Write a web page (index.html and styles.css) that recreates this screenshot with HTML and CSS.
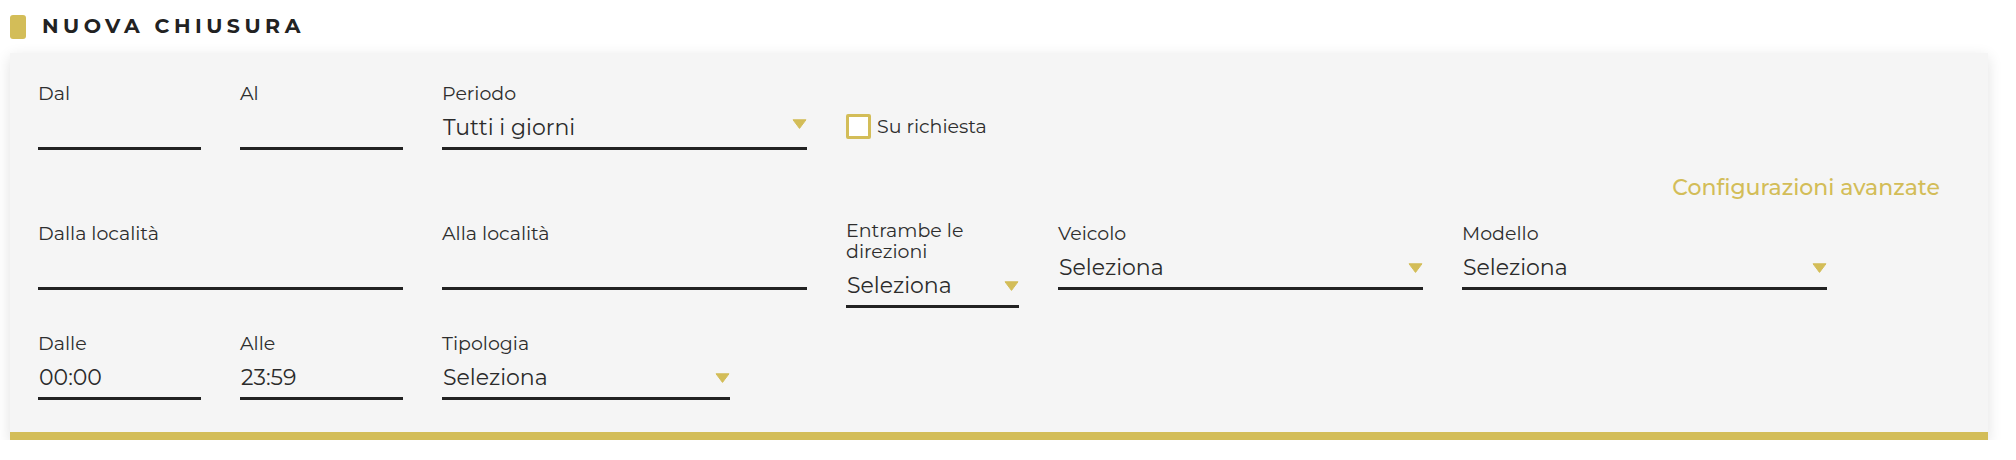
FILE: index.html
```html
<!DOCTYPE html>
<html lang="it">
<head>
<meta charset="utf-8">
<title>Nuova chiusura</title>
<link rel="stylesheet" href="styles.css">
</head>
<body>
<div class="page">
  <header class="section-title">
    <span class="marker"></span>
    <h2 class="title">NUOVA CHIUSURA</h2>
  </header>

  <section class="card">
    <div class="row">
      <div class="field w-sm">
        <div class="label">Dal</div>
        <div class="input"></div>
      </div>
      <div class="field w-sm">
        <div class="label">Al</div>
        <div class="input"></div>
      </div>
      <div class="field w-lg">
        <div class="label">Periodo</div>
        <div class="input select">
          <span class="value">Tutti i giorni</span>
          <svg class="caret caret-high" width="15" height="10" viewBox="0 0 15 10"><path d="M1 0.8 H14 L7.5 9.4 Z" fill="#d3bd58" stroke="#d3bd58" stroke-width="1" stroke-linejoin="round"/></svg>
        </div>
      </div>
      <label class="check">
        <span class="box"></span>
        <span class="check-text">Su richiesta</span>
      </label>
    </div>

    <div class="adv">
      <a class="adv-link">Configurazioni avanzate</a>
    </div>

    <div class="row">
      <div class="field w-lg">
        <div class="label">Dalla località</div>
        <div class="input"></div>
      </div>
      <div class="field w-lg">
        <div class="label">Alla località</div>
        <div class="input"></div>
      </div>
      <div class="field w-xs field-raised">
        <div class="label">Entrambe le direzioni</div>
        <div class="input select">
          <span class="value">Seleziona</span>
          <svg class="caret" width="15" height="10" viewBox="0 0 15 10"><path d="M1 0.8 H14 L7.5 9.4 Z" fill="#d3bd58" stroke="#d3bd58" stroke-width="1" stroke-linejoin="round"/></svg>
        </div>
      </div>
      <div class="field w-lg">
        <div class="label">Veicolo</div>
        <div class="input select">
          <span class="value">Seleziona</span>
          <svg class="caret" width="15" height="10" viewBox="0 0 15 10"><path d="M1 0.8 H14 L7.5 9.4 Z" fill="#d3bd58" stroke="#d3bd58" stroke-width="1" stroke-linejoin="round"/></svg>
        </div>
      </div>
      <div class="field w-lg">
        <div class="label">Modello</div>
        <div class="input select">
          <span class="value">Seleziona</span>
          <svg class="caret" width="15" height="10" viewBox="0 0 15 10"><path d="M1 0.8 H14 L7.5 9.4 Z" fill="#d3bd58" stroke="#d3bd58" stroke-width="1" stroke-linejoin="round"/></svg>
        </div>
      </div>
    </div>

    <div class="row row-last">
      <div class="field w-sm">
        <div class="label">Dalle</div>
        <div class="input"><span class="value">00:00</span></div>
      </div>
      <div class="field w-sm">
        <div class="label">Alle</div>
        <div class="input"><span class="value">23:59</span></div>
      </div>
      <div class="field w-md">
        <div class="label">Tipologia</div>
        <div class="input select">
          <span class="value">Seleziona</span>
          <svg class="caret" width="15" height="10" viewBox="0 0 15 10"><path d="M1 0.8 H14 L7.5 9.4 Z" fill="#d3bd58" stroke="#d3bd58" stroke-width="1" stroke-linejoin="round"/></svg>
        </div>
      </div>
    </div>
  </section>
</div>
</body>
</html>
```

FILE: styles.css
```css
* {
  box-sizing: border-box;
}

body {
  margin: 0;
  background: #ffffff;
  font-family: "Montserrat", Inter, "Noto Sans", sans-serif;
  color: #2b2b2b;
}

.page {
  padding: 15px 28px 0 10px;
}

.section-title {
  display: flex;
  align-items: flex-start;
  height: 24px;
  margin: 0 0 14px;
}

.marker {
  width: 16px;
  height: 24px;
  border-radius: 3px;
  background: #d3bd58;
  flex: none;
}

.title {
  margin: 0 0 0 16px;
  font-size: 20.5px;
  line-height: 21px;
  font-weight: 700;
  letter-spacing: 4.5px;
  color: #222222;
}

.card {
  background: #f5f5f5;
  border-bottom: 8px solid #d3bd58;
  box-shadow: 0 4px 14px rgba(0, 0, 0, 0.12);
  padding: 30px 28px 32px;
}

.row {
  display: flex;
  align-items: flex-start;
  gap: 39px;
}

.row-last {
  margin-top: 25px;
}

.field {
  flex: none;
}

.field-raised {
  margin-top: -3px;
}

.w-sm { width: 163px; }
.w-md { width: 288px; }
.w-lg { width: 365px; }
.w-xs { width: 173px; }

.label {
  font-size: 19px;
  line-height: 21px;
  color: #2e2e2e;
}

.input {
  display: flex;
  align-items: center;
  margin-top: 10px;
  height: 36px;
  padding: 0 0 5px 1px;
  border-bottom: 3px solid #222222;
  font-size: 22px;
  line-height: 28px;
  color: #2b2b2b;
}

.value {
  flex: 1;
  white-space: nowrap;
}

.caret {
  flex: none;
  display: block;
}

.caret-high {
  margin-bottom: 8px;
}

.check {
  display: flex;
  align-items: center;
  gap: 6px;
  margin-top: 31px;
}

.box {
  width: 25px;
  height: 25px;
  border: 3px solid #d3bd58;
  border-radius: 2px;
  background: #ffffff;
  flex: none;
}

.check-text {
  font-size: 19px;
  line-height: 21px;
  color: #2e2e2e;
}

.adv {
  display: flex;
  justify-content: flex-end;
  margin: 24px 20px 21px 0;
}

.adv-link {
  font-size: 22px;
  line-height: 28px;
  font-weight: 500;
  color: #d3bd58;
  cursor: pointer;
}
```
